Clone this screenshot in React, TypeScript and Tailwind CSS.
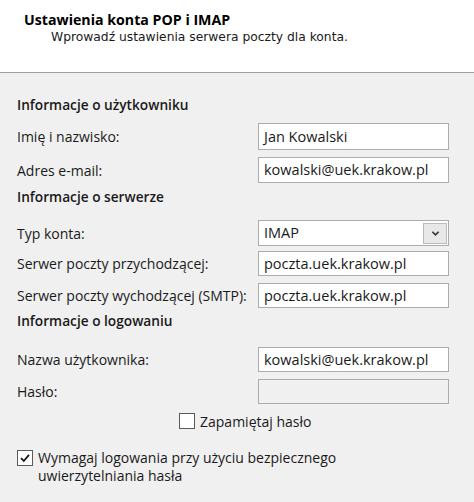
import React from 'react';

const labelFont = { fontFamily: '"Open Sans", "Noto Sans", sans-serif' };

function TextBox({ value, disabled }: { value?: string; disabled?: boolean }) {
  return (
    <div
      className={`h-full w-[191px] border border-[#adadad] flex items-center pl-[5px] text-[14.5px] text-[#1a1a1a] ${
        disabled ? 'bg-[#f0f0f0]' : 'bg-white'
      }`}
    >
      {value}
    </div>
  );
}

function Row({ label, children, className }: { label: string; children: React.ReactNode; className: string }) {
  return (
    <div className={`grid grid-cols-[241px_191px] items-center ${className}`}>
      <span className="text-[14px] text-[#1a1a1a] whitespace-nowrap">{label}</span>
      {children}
    </div>
  );
}

function Heading({ text, className }: { text: string; className: string }) {
  return <div className={`h-5 flex items-center text-[13.7px] font-semibold text-[#1a1a1a] ${className}`}>{text}</div>;
}

function Checkbox({ checked }: { checked?: boolean }) {
  return (
    <div className="w-4 h-4 border border-[#5a5a5a] bg-white flex items-center justify-center shrink-0">
      {checked && (
        <svg viewBox="0 0 12 12" className="w-3 h-3">
          <path d="M2 6.2 L4.8 9 L10 2.8" fill="none" stroke="#1a1a1a" strokeWidth="1.8" />
        </svg>
      )}
    </div>
  );
}

export default function App() {
  return (
    <div className="w-[474px] h-[502px] bg-[#f0f0f0] overflow-hidden" style={labelFont}>
      {/* header */}
      <div className="h-[73px] bg-white border-b border-[#a0a0a0] pl-[24px] pt-[11px]">
        <div className="text-[14.2px] font-bold text-black leading-[18px]">Ustawienia konta POP i IMAP</div>
        <div
          className="text-[12.3px] text-[#1a1a1a] leading-[17px] pl-[27px]"
          style={{ fontFamily: '"DejaVu Sans", Tahoma, sans-serif' }}
        >
          Wprowadź ustawienia serwera poczty dla konta.
        </div>
      </div>

      <div className="pl-[17px] pt-[22px] flex flex-col">
        <Heading text="Informacje o użytkowniku" className="" />
        <Row label="Imię i nazwisko:" className="mt-[8px] h-[27px]">
          <TextBox value="Jan Kowalski" />
        </Row>
        <Row label="Adres e-mail:" className="mt-[7px] h-[26px]">
          <TextBox value="kowalski@uek.krakow.pl" />
        </Row>

        <Heading text="Informacje o serwerze" className="mt-[4px]" />
        <Row label="Typ konta:" className="mt-[13px] h-[26px]">
          <div className="h-full w-[191px] border border-[#adadad] bg-white flex items-center justify-between pl-[5px] pr-[1px] text-[14.5px] text-[#1a1a1a]">
            <span>IMAP</span>
            <div className="w-[24px] h-[21px] bg-[#e8e8e8] border border-[#bcbcbc] flex items-center justify-center">
              <svg viewBox="0 0 10 10" className="w-[9px] h-[9px]">
                <path d="M1.5 3 L5 6.5 L8.5 3" fill="none" stroke="#333" strokeWidth="1.8" />
              </svg>
            </div>
          </div>
        </Row>
        <Row label="Serwer poczty przychodzącej:" className="mt-[5px] h-[25px]">
          <TextBox value="poczta.uek.krakow.pl" />
        </Row>
        <Row label="Serwer poczty wychodzącej (SMTP):" className="mt-[7px] h-[25px]">
          <TextBox value="poczta.uek.krakow.pl" />
        </Row>

        <Heading text="Informacje o logowaniu" className="mt-[3px]" />
        <Row label="Nazwa użytkownika:" className="mt-[16px] h-[25px]">
          <TextBox value="kowalski@uek.krakow.pl" />
        </Row>
        <Row label="Hasło:" className="mt-[7px] h-[25px]">
          <TextBox disabled />
        </Row>

        <div className="mt-[9px] h-4 flex items-center gap-[5px] pl-[162px]">
          <Checkbox />
          <span className="text-[14px] text-[#1a1a1a] whitespace-nowrap">Zapamiętaj hasło</span>
        </div>

        <div className="mt-[21px] flex items-start gap-[5px]">
          <Checkbox checked />
          <span className="text-[14px] text-[#1a1a1a] leading-[18px] -mt-[1px]">
            Wymagaj logowania przy użyciu bezpiecznego
            <br />
            uwierzytelniania hasła
          </span>
        </div>
      </div>
    </div>
  );
}
